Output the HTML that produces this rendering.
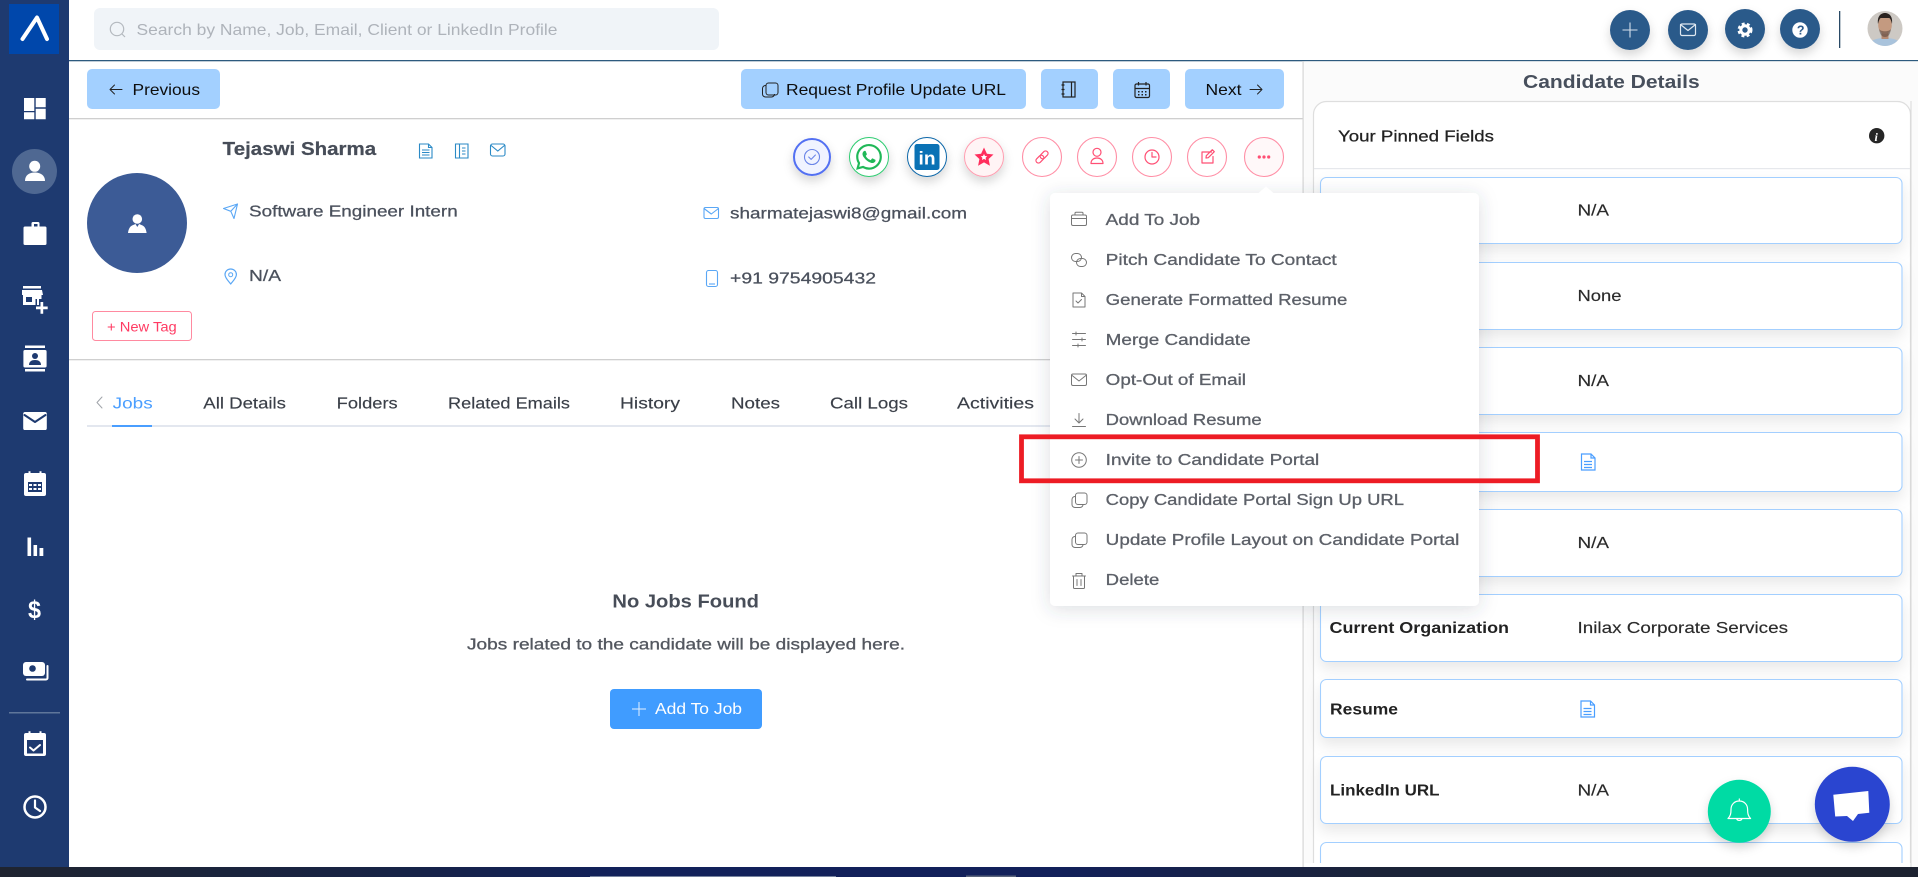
<!DOCTYPE html>
<html lang="en">
<head>
<meta charset="utf-8">
<title>Candidate Profile</title>
<style>
html,body{margin:0;padding:0;width:1918px;height:877px;overflow:hidden;background:#fff}
svg{display:block;position:absolute;left:0;top:0}
text{font-family:"Liberation Sans",sans-serif;font-size:16px}
.b{font-weight:700}
.s{fill:none;stroke-linecap:round;stroke-linejoin:round}
</style>
</head>
<body>
<svg width="1918" height="877" viewBox="0 0 1918 877" xmlns="http://www.w3.org/2000/svg">
<defs>
<filter id="sh1" x="-30%" y="-30%" width="160%" height="180%"><feDropShadow dx="0" dy="5" stdDeviation="5" flood-color="#000" flood-opacity=".16"/></filter>
<filter id="shc" x="-5%" y="-20%" width="110%" height="150%"><feDropShadow dx="0" dy="7" stdDeviation="7" flood-color="#000" flood-opacity=".09"/></filter>
<filter id="shm" x="-10%" y="-10%" width="120%" height="120%"><feDropShadow dx="0" dy="3" stdDeviation="9" flood-color="#3a4660" flood-opacity=".18"/></filter>
<linearGradient id="tb" x1="0" x2="1" y1="0" y2="0"><stop offset="0" stop-color="#1f2430"/><stop offset=".2" stop-color="#172345"/><stop offset=".32" stop-color="#12215a"/><stop offset=".55" stop-color="#12205a"/><stop offset=".72" stop-color="#1b2338"/><stop offset="1" stop-color="#1c2230"/></linearGradient>
<clipPath id="av"><circle cx="1885" cy="28.5" r="17.5"/></clipPath>
<clipPath id="pc"><rect x="1304" y="61" width="614" height="802"/></clipPath>
</defs>

<!-- sidebar -->
<rect x="0" y="0" width="69" height="867" fill="#1e3a70"/>
<rect x="9" y="4" width="50" height="50" fill="#0047ab"/>
<path class="s" d="M22.500 39 37 17.500 47 39" stroke="#fff" stroke-width="4"/>
<g fill="#fff">
<path d="M24 98h10.300v13H24zM35.700 98h10v9.300h-10zM35.700 108.700h10v10.600h-10zM24 112.300h10.300v7H24z"/>
<circle cx="34.500" cy="171.500" r="22.500" fill="#4f6892"/>
<circle cx="34.700" cy="166.300" r="5.500"/><path d="M25 181c0-6 4.500-8.500 9.700-8.500s10.300 2.500 10.300 8.500z"/>
<path d="M24.500 226.500h7v-3a1.500 1.500 0 0 1 1.500-1.500h5a1.500 1.500 0 0 1 1.500 1.500v3h5.500a1.500 1.500 0 0 1 1.500 1.500v15.500a1.500 1.500 0 0 1-1.500 1.500h-20a1.500 1.500 0 0 1-1.500-1.500V228a1.500 1.500 0 0 1 1.500-1.500zm9.500-2.500v2.500h3.500V224z" fill-rule="evenodd"/>
<path d="M23 286h18v2.500H23zM22 290h20l1 5h-1.500v4H39v6h-2v-6h-1.500v6H23v-10h-1zM26 297v5h6v-5z" fill-rule="evenodd"/>
<path d="M40.500 302h2.700v4.500h4.500v2.700h-4.500v4.600h-2.700v-4.600H36v-2.700h4.500z"/>
<path d="M25 345.500h20v2.500H25zM25 369h20v2.500H25zM25 350h20a1.600 1.600 0 0 1 1.600 1.600v14.300a1.600 1.600 0 0 1-1.600 1.600H25a1.600 1.600 0 0 1-1.600-1.600v-14.300A1.600 1.600 0 0 1 25 350z"/>
<path d="M25 412h20a1.800 1.800 0 0 1 1.800 1.800v14.400A1.800 1.800 0 0 1 45 430H25a1.800 1.800 0 0 1-1.800-1.800v-14.400A1.800 1.800 0 0 1 25 412z"/>
<path d="M26 473h2.500v-1.800h2V473h9v-1.800h2V473H44a2 2 0 0 1 2 2v19a2 2 0 0 1-2 2H26a2 2 0 0 1-2-2v-19a2 2 0 0 1 2-2z"/>
<rect x="27.500" y="537.500" width="3.600" height="18.500"/><rect x="33.500" y="545" width="3.600" height="11"/><rect x="39.500" y="548" width="3.800" height="8"/>
<path d="M26 662h16a3 3 0 0 1 3 3v8a3 3 0 0 1-3 3H26a3 3 0 0 1-3-3v-8a3 3 0 0 1 3-3z"/>
<path d="M26 733h2.500v-1.800h2V733h9v-1.800h2V733H44a2 2 0 0 1 2 2v19a2 2 0 0 1-2 2H26a2 2 0 0 1-2-2v-19a2 2 0 0 1 2-2z"/>
</g>
<g fill="#1e3a70">
<circle cx="35" cy="356" r="3"/><path d="M29 365c0-3.500 2.500-5 6-5s6 1.500 6 5z"/>
<rect x="28" y="482" width="14" height="10"/>
<circle cx="32.500" cy="668.500" r="3.300"/>
<rect x="27" y="740" width="16" height="13.500"/>
</g>
<path class="s" d="M24.500 415 35 422l10.500-7" stroke="#1e3a70" stroke-width="2"/>
<g fill="#fff"><rect x="29" y="484" width="3" height="2"/><rect x="33.500" y="484" width="3" height="2"/><rect x="38" y="484" width="3" height="2"/><rect x="29" y="488" width="3" height="2"/><rect x="33.500" y="488" width="3" height="2"/><rect x="38" y="488" width="3" height="2"/></g>
<path class="s" d="M30 747.500l3.500 3 6.500-5.500" stroke="#fff" stroke-width="2"/>
<path class="s" d="M47.500 666v12a1.500 1.500 0 0 1-1.500 1.500H27" stroke="#fff" stroke-width="2"/>
<text x="28" y="618" class="b" style="font-size:25px" fill="#fff" textLength="13" lengthAdjust="spacingAndGlyphs">$</text>
<rect x="9" y="712" width="51" height="1.500" fill="#5f769a"/>
<circle cx="35" cy="807" r="10.500" fill="none" stroke="#fff" stroke-width="2.500"/>
<path class="s" d="M35 800.500v7l5 3.500" stroke="#fff" stroke-width="2.200"/>

<!-- top bar -->
<rect x="69" y="60" width="1849" height="1.300" fill="#2d5a7e"/>
<rect x="94" y="8" width="625" height="42" rx="6" fill="#f0f4f8"/>
<circle cx="117" cy="29" r="6.700" fill="none" stroke="#b4b9bf" stroke-width="1.200"/><path d="M122 34l3 3" stroke="#b4b9bf" stroke-width="1.200"/>
<text x="136.500" y="34.800" fill="#aeb3ba" textLength="421" lengthAdjust="spacingAndGlyphs">Search by Name, Job, Email, Client or LinkedIn Profile</text>

<g fill="#2c5a8a">
<circle cx="1630" cy="30" r="20" filter="url(#sh1)"/>
<circle cx="1688" cy="30" r="20" filter="url(#sh1)"/>
<circle cx="1745" cy="29" r="20" filter="url(#sh1)"/>
<circle cx="1800" cy="29" r="20" filter="url(#sh1)"/>
</g>
<path d="M1630 22.500v15M1622.500 30h15" stroke="#d5e0ec" stroke-width="1.100"/>
<rect x="1680.500" y="24" width="15" height="11.500" rx="1.500" fill="none" stroke="#dfe8f1" stroke-width="1.200"/>
<path class="s" d="M1680.500 24.500l7.500 6 7.500-6" stroke="#dfe8f1" stroke-width="1.200"/>
<circle cx="1745" cy="30" r="4.200" fill="none" stroke="#fff" stroke-width="3"/>
<circle cx="1745" cy="30" r="6.300" fill="none" stroke="#fff" stroke-width="2.400" stroke-dasharray="2.900 2.350"/>
<circle cx="1800" cy="30" r="7.700" fill="#fff"/>
<text x="1796.900" y="34.500" class="b" style="font-size:12.500px" fill="#2c5a8a">?</text>
<rect x="1839" y="11" width="1.300" height="37" fill="#2a4a66"/>
<g clip-path="url(#av)">
<rect x="1865" y="10" width="40" height="40" fill="#cdc9c4"/>
<path d="M1868 47c1-7 9-9 17-9s16 2 17 9z" fill="#a9c3dc"/>
<rect x="1881.500" y="31" width="7" height="8" fill="#b58a72"/>
<ellipse cx="1885" cy="25" rx="6.800" ry="9" fill="#c49a80"/>
<path d="M1878 24c-1-8 3-11 7-11s8 3 7 11c-1-4-2-6-3-6h-8c-1 0-2 2-3 6z" fill="#2a2320"/>
<path d="M1879 29c1 6 3 8 6 8s5-2 6-8c-2 3-10 3-12 0z" fill="#4b3a33" opacity=".5"/>
</g>

<!-- left pane -->
<rect x="87" y="69" width="133" height="40" rx="5" fill="#a3d0ff"/>
<rect x="741" y="69" width="285" height="40" rx="5" fill="#a3d0ff"/>
<rect x="1041" y="69" width="57" height="40" rx="5" fill="#a3d0ff"/>
<rect x="1113" y="69" width="57" height="40" rx="5" fill="#a3d0ff"/>
<rect x="1185" y="69" width="99" height="40" rx="5" fill="#a3d0ff"/>
<path class="s" d="M122 89.500h-12M114.500 85l-4.500 4.500 4.500 4.500" stroke="#222" stroke-width="1"/>
<text x="132.500" y="95" fill="#0d0d0d" textLength="67.500" lengthAdjust="spacingAndGlyphs">Previous</text>
<g fill="none" stroke="#222" stroke-width="1">
<rect x="766" y="83" width="12" height="12" rx="2.500"/>
<path d="M766 85.500h-.5a3 3 0 0 0-3 3v5.500a3 3 0 0 0 3 3h6a3 3 0 0 0 3-3v-.000"/>
</g>
<text x="786" y="95" fill="#0d0d0d" textLength="220" lengthAdjust="spacingAndGlyphs">Request Profile Update URL</text>
<g fill="none" stroke="#222" stroke-width="1.200">
<rect x="1063" y="82" width="12" height="15"/><path d="M1071.500 82v15M1061.500 85h3M1061.500 89.500h3M1061.500 94h3"/>
<rect x="1135" y="84" width="14.500" height="13.500" rx="1.500"/><path d="M1135 88.500h14.500M1138.500 82v3.500M1146 82v3.500"/>
</g>
<g fill="#222"><rect x="1138" y="91" width="1.500" height="1.500"/><rect x="1141.500" y="91" width="1.500" height="1.500"/><rect x="1145" y="91" width="1.500" height="1.500"/><rect x="1138" y="94" width="1.500" height="1.500"/><rect x="1141.500" y="94" width="1.500" height="1.500"/><rect x="1145" y="94" width="1.500" height="1.500"/></g>
<text x="1205.500" y="95" fill="#0d0d0d" textLength="36" lengthAdjust="spacingAndGlyphs">Next</text>
<path class="s" d="M1250 89.500h12M1257.500 85l4.500 4.500-4.500 4.500" stroke="#222" stroke-width="1"/>
<rect x="69" y="118" width="1234" height="1.300" fill="#cfcfcf"/>
<rect x="1302.500" y="61" width="1.200" height="806" fill="#d5d5d5"/>

<circle cx="137" cy="223" r="50" fill="#3c5b96"/>
<circle cx="137.300" cy="219" r="4.800" fill="#fff"/>
<path d="M128 233c.5-4 2-6.500 4-7.500l3.500-1.500 1.800 3 1.800-3 3.500 1.500c2 1 3.500 3.500 4 7.500z" fill="#fff"/>

<g fill="#474d58" stroke="#474d58" stroke-width=".2">
<text x="222.700" y="155.200" class="b" style="font-size:18px" textLength="153.500" lengthAdjust="spacingAndGlyphs">Tejaswi Sharma</text>
</g>
<g fill="none" stroke="#2b8ac6" stroke-width="1.100">
<path d="M419.500 144h9l3.500 3.500v10.500h-12.500zM428.500 144v3.500h3.500M422 150h7.500M422 152.500h7.500M422 155h7.500"/>
<path d="M455.500 144h12.500v14h-12.500zM459.500 144v14M462 148h3.500M462 151h3.500M462 154h3.500"/>
<rect x="490.500" y="144" width="14.500" height="12" rx="2"/><path d="M490.500 145l7.300 6 7.200-6"/>
</g>

<path class="s" d="M223.500 208.500l14-4.500-3.500 14.500-3.200-7.200zM230.800 211.300l6.700-7.300" stroke="#5aa7f5" stroke-width="1.100"/>
<path class="s" d="M230.700 269c-3.300 0-5.700 2.500-5.700 5.500 0 3.500 3.500 6.500 5.700 9.500 2.200-3 5.700-6 5.700-9.500 0-3-2.400-5.500-5.700-5.500z" stroke="#5aa7f5" stroke-width="1.200"/>
<circle cx="230.700" cy="274.700" r="2" fill="none" stroke="#5aa7f5" stroke-width="1"/>
<rect x="704" y="207.500" width="14.500" height="11" rx="1.500" fill="none" stroke="#5aa7f5" stroke-width="1.100"/>
<path class="s" d="M704 208.500l7.300 5.500 7.200-5.500" stroke="#5aa7f5" stroke-width="1.100"/>
<rect x="706.500" y="270.500" width="11" height="16" rx="2" fill="none" stroke="#5aa7f5" stroke-width="1.100"/>
<path d="M709 284h6" stroke="#5aa7f5" stroke-width="1.100"/>

<g fill="#4a505c" stroke="#4a505c" stroke-width=".25">
<text x="249" y="216.500" textLength="208.700" lengthAdjust="spacingAndGlyphs">Software Engineer Intern</text>
<text x="249" y="281" textLength="32" lengthAdjust="spacingAndGlyphs">N/A</text>
<text x="730" y="218.500" textLength="237" lengthAdjust="spacingAndGlyphs">sharmatejaswi8@gmail.com</text>
<text x="730" y="283.500" textLength="146" lengthAdjust="spacingAndGlyphs">+91 9754905432</text>
</g>

<rect x="92.500" y="311.500" width="99" height="29" rx="3" fill="#fff" stroke="#ff8aa0" stroke-width="1"/>
<text x="107" y="331.500" style="font-size:14px" fill="#ff3b63" textLength="69.700" lengthAdjust="spacingAndGlyphs">+ New Tag</text>

<!-- action circles -->
<circle cx="812" cy="157" r="18" fill="#f0f3ff" stroke="#5270f2" stroke-width="2" filter="url(#sh1)"/>
<circle cx="812" cy="157" r="7.500" fill="none" stroke="#6a85e8" stroke-width="1.100"/>
<path class="s" d="M808.700 157l2.400 2.400 4.300-4.400" stroke="#6a85e8" stroke-width="1.100"/>
<circle cx="869" cy="157" r="19.500" fill="#fff" stroke="#2ecc71" stroke-width="1" filter="url(#sh1)"/>
<path transform="translate(856 144) scale(1.080)" fill="#20b858" d="M17.472 14.382c-.297-.149-1.758-.867-2.03-.967-.273-.099-.471-.148-.67.15-.197.297-.767.966-.94 1.164-.173.199-.347.223-.644.075-.297-.15-1.255-.463-2.39-1.475-.883-.788-1.48-1.761-1.653-2.059-.173-.297-.018-.458.13-.606.134-.133.298-.347.446-.52.149-.174.198-.298.298-.497.099-.198.05-.371-.025-.52-.075-.149-.669-1.612-.916-2.207-.242-.579-.487-.5-.669-.51-.173-.008-.371-.01-.57-.01-.198 0-.52.074-.792.372-.272.297-1.04 1.016-1.04 2.479 0 1.462 1.065 2.875 1.213 3.074.149.198 2.096 3.2 5.077 4.487.709.306 1.262.489 1.694.625.712.227 1.36.195 1.871.118.571-.085 1.758-.719 2.006-1.413.248-.694.248-1.289.173-1.413-.074-.124-.272-.198-.57-.347m-5.421 7.403h-.004a9.87 9.87 0 01-5.031-1.378l-.361-.214-3.741.982.998-3.648-.235-.374a9.86 9.86 0 01-1.51-5.26c.001-5.45 4.436-9.884 9.888-9.884 2.64 0 5.122 1.03 6.988 2.898a9.825 9.825 0 012.893 6.994c-.003 5.45-4.437 9.884-9.885 9.884m8.413-18.297A11.815 11.815 0 0012.05 0C5.495 0 .16 5.335.157 11.892c0 2.096.547 4.142 1.588 5.945L.057 24l6.305-1.654a11.882 11.882 0 005.683 1.448h.005c6.554 0 11.89-5.335 11.893-11.893a11.821 11.821 0 00-3.48-8.413z"/>
<circle cx="927" cy="157" r="19.500" fill="#fff" stroke="#0a66a8" stroke-width="1" filter="url(#sh1)"/>
<rect x="914.500" y="144" width="25" height="26" rx="2.500" fill="#0a72b5"/>
<text x="918.500" y="164.500" class="b" style="font-size:18px" fill="#fff" textLength="17" lengthAdjust="spacingAndGlyphs">in</text>
<circle cx="984" cy="157" r="19.500" fill="#fff4f5" stroke="#ff9db0" stroke-width="1" filter="url(#sh1)"/>
<path d="M984 147.500l2.900 6.200 6.600.8-4.900 4.500 1.300 6.700-5.900-3.300-5.900 3.300 1.300-6.700-4.900-4.500 6.600-.8z" fill="#ff2e5d"/>
<path d="M984 154l1 2 2.200.3-1.600 1.500.4 2.200-2-1.100-2 1.100.4-2.200-1.600-1.500 2.200-.3z" fill="#fff"/>
<g fill="#fff" stroke="#ff8fa6" stroke-width="1.100">
<circle cx="1042" cy="157" r="19.500"/><circle cx="1097" cy="157" r="19.500"/><circle cx="1152" cy="157" r="19.500"/><circle cx="1207" cy="157" r="19.500"/><circle cx="1264" cy="157" r="19.500" fill="#fff8f9"/>
</g>
<g fill="none" stroke="#ff4f74" stroke-width="1.200" stroke-linecap="round" stroke-linejoin="round">
<g transform="rotate(-45 1042 157)"><rect x="1034.500" y="154.500" width="9" height="5" rx="2.500"/><rect x="1040.500" y="154.500" width="9" height="5" rx="2.500"/></g>
<circle cx="1097" cy="152.300" r="4"/><path d="M1091 163.500c0-3.500 2.500-5.500 6-5.500s6 2 6 5.500z"/>
<circle cx="1152" cy="157" r="7"/><path d="M1152 152.500v4.500h4"/>
<path d="M1211.500 152h-9.500v11h11v-6.500M1206 158l.3-2.300 6-6 2 2-6 6z"/>
</g>
<g fill="#ff4f74"><circle cx="1259.300" cy="157" r="1.600"/><circle cx="1264" cy="157" r="1.600"/><circle cx="1268.700" cy="157" r="1.600"/></g>

<rect x="69" y="359" width="1234" height="1.300" fill="#cfcfcf"/>

<!-- tabs -->
<path class="s" d="M102 397l-5 5.500 5 5.500" stroke="#a0a4aa" stroke-width="1"/>
<text x="112.700" y="408.500" fill="#4a9eff" textLength="40" lengthAdjust="spacingAndGlyphs">Jobs</text>
<g fill="#3a3f48" stroke="#3a3f48" stroke-width=".15">
<text x="203.300" y="408.500" textLength="82.700" lengthAdjust="spacingAndGlyphs">All Details</text>
<text x="336.700" y="408.500" textLength="61" lengthAdjust="spacingAndGlyphs">Folders</text>
<text x="448" y="408.500" textLength="122" lengthAdjust="spacingAndGlyphs">Related Emails</text>
<text x="620" y="408.500" textLength="60" lengthAdjust="spacingAndGlyphs">History</text>
<text x="731" y="408.500" textLength="49" lengthAdjust="spacingAndGlyphs">Notes</text>
<text x="830" y="408.500" textLength="78" lengthAdjust="spacingAndGlyphs">Call Logs</text>
<text x="957" y="408.500" textLength="77" lengthAdjust="spacingAndGlyphs">Activities</text>
</g>
<rect x="87" y="425" width="1198" height="2" fill="#e3e7ef"/>
<rect x="112" y="425" width="40" height="2" fill="#4a9eff"/>

<!-- empty state -->
<text x="612.400" y="607.500" class="b" style="font-size:18px" fill="#474d58" textLength="146.600" lengthAdjust="spacingAndGlyphs">No Jobs Found</text>
<g fill="#53575f" stroke="#53575f" stroke-width=".3">
<text x="467" y="649.500" textLength="438" lengthAdjust="spacingAndGlyphs">Jobs related to the candidate will be displayed here.</text>
</g>
<rect x="610" y="689" width="152" height="40" rx="4" fill="#409cff"/>
<path d="M639 702v14M632 709h14" stroke="#e3f0ff" stroke-width="1"/>
<text x="655" y="714" fill="#fff" textLength="87" lengthAdjust="spacingAndGlyphs">Add To Job</text>

<!-- right panel -->
<rect x="1304.200" y="61.300" width="614" height="806" fill="#fbfbfb"/>
<text x="1523" y="88" class="b" style="font-size:18px" fill="#474f5c" textLength="176.700" lengthAdjust="spacingAndGlyphs">Candidate Details</text>
<g clip-path="url(#pc)">
<rect x="1313.500" y="101.500" width="597" height="800" rx="13" fill="#fff" stroke="#dedede" stroke-width="1.200"/>
<rect x="1314" y="168" width="596" height="1.200" fill="#e6e8ec"/>
<g fill="#fff" stroke="#a3cfff" stroke-width="1.100">
<rect x="1320.500" y="177.500" width="581.500" height="66" rx="6" filter="url(#shc)"/>
<rect x="1320.500" y="262.500" width="581.500" height="67" rx="6" filter="url(#shc)"/>
<rect x="1320.500" y="347.500" width="581.500" height="67" rx="6" filter="url(#shc)"/>
<rect x="1320.500" y="432.500" width="581.500" height="59" rx="6" filter="url(#shc)"/>
<rect x="1320.500" y="509.500" width="581.500" height="67" rx="6" filter="url(#shc)"/>
<rect x="1320.500" y="594.500" width="581.500" height="67" rx="6" filter="url(#shc)"/>
<rect x="1320.500" y="679.500" width="581.500" height="58" rx="6" filter="url(#shc)"/>
<rect x="1320.500" y="756.500" width="581.500" height="67" rx="6" filter="url(#shc)"/>
<rect x="1320.500" y="842.500" width="581.500" height="60" rx="6"/>
</g>
</g>
<rect x="1910.500" y="101" width="1" height="766" fill="#d8d8d8"/>
<rect x="1304.200" y="863" width="606" height="4" fill="#fff"/>
<g fill="#222" stroke="#222" stroke-width=".25">
<text x="1338" y="141.500" textLength="156" lengthAdjust="spacingAndGlyphs">Your Pinned Fields</text>
</g>
<circle cx="1876.700" cy="135.700" r="7.700" fill="#262626"/>
<text x="1874.500" y="141" class="b" style="font-size:12px;font-style:italic;font-family:'Liberation Serif',serif" fill="#fff">i</text>
<g fill="#2a2a2a" stroke="#2a2a2a" stroke-width=".15">
<text x="1577.500" y="215.500" textLength="31.500" lengthAdjust="spacingAndGlyphs">N/A</text>
<text x="1577.500" y="300.800" textLength="44" lengthAdjust="spacingAndGlyphs">None</text>
<text x="1577.500" y="385.800" textLength="31.500" lengthAdjust="spacingAndGlyphs">N/A</text>
<text x="1577.500" y="548" textLength="31.500" lengthAdjust="spacingAndGlyphs">N/A</text>
<text x="1577.500" y="633" textLength="210.500" lengthAdjust="spacingAndGlyphs">Inilax Corporate Services</text>
<text x="1577.500" y="795.300" textLength="31.500" lengthAdjust="spacingAndGlyphs">N/A</text>
</g>
<g fill="#222">
<text x="1329.500" y="633" class="b" textLength="179.500" lengthAdjust="spacingAndGlyphs">Current Organization</text>
<text x="1330" y="714.500" class="b" textLength="68" lengthAdjust="spacingAndGlyphs">Resume</text>
<text x="1330" y="795.300" class="b" textLength="109.500" lengthAdjust="spacingAndGlyphs">LinkedIn URL</text>
</g>
<g fill="none" stroke="#4a9eff" stroke-width="1.200">
<path d="M1581.500 454h9.500l4 4v12h-13.500zM1591 454v4h4M1584 461.500h8M1584 464.500h8M1584 467.500h8"/>
<path d="M1581 701h9.500l4 4v12H1581zM1590.500 701v4h4M1583.500 708.500h8M1583.500 711.500h8M1583.500 714.500h8"/>
</g>

<!-- context menu -->
<rect x="1050" y="193" width="429" height="413" rx="5" fill="#fff" filter="url(#shm)"/>
<path d="M1258 193.500l8-7 8 7z" fill="#fff"/>
<g fill="#5c6068" stroke="#5c6068" stroke-width=".3">
<text x="1105.700" y="225" textLength="94.300" lengthAdjust="spacingAndGlyphs">Add To Job</text>
<text x="1105.700" y="265.200" textLength="231" lengthAdjust="spacingAndGlyphs">Pitch Candidate To Contact</text>
<text x="1105.700" y="305.200" textLength="241.600" lengthAdjust="spacingAndGlyphs">Generate Formatted Resume</text>
<text x="1105.700" y="345.200" textLength="145" lengthAdjust="spacingAndGlyphs">Merge Candidate</text>
<text x="1105.700" y="385.200" textLength="140.300" lengthAdjust="spacingAndGlyphs">Opt-Out of Email</text>
<text x="1105.700" y="425" textLength="156" lengthAdjust="spacingAndGlyphs">Download Resume</text>
<text x="1105.700" y="465" textLength="213.600" lengthAdjust="spacingAndGlyphs">Invite to Candidate Portal</text>
<text x="1105.700" y="505.200" textLength="298.300" lengthAdjust="spacingAndGlyphs">Copy Candidate Portal Sign Up URL</text>
<text x="1105.700" y="545.200" textLength="353.600" lengthAdjust="spacingAndGlyphs">Update Profile Layout on Candidate Portal</text>
<text x="1105.700" y="585.200" textLength="53.600" lengthAdjust="spacingAndGlyphs">Delete</text>
</g>
<g fill="none" stroke="#777" stroke-width="1" stroke-linecap="round" stroke-linejoin="round">
<rect x="1071.500" y="215" width="15" height="10.500" rx="1.500"/><path d="M1071.500 218.500h15M1075 215v-1.800a1 1 0 0 1 1-1h6a1 1 0 0 1 1 1v1.800"/>
<rect x="1071.500" y="253.500" width="10" height="8" rx="4"/><rect x="1076.500" y="258.500" width="10" height="8" rx="4"/>
<path d="M1073 293h8.500l3.500 3.500V307h-12zM1081.500 293v3.500h3.500M1076 301l2 2 3.500-3.500"/>
<path d="M1072.500 333.500h13M1072.500 339.500h13M1072.500 345.500h13M1076 332v3M1082 338v3M1078 344v3"/>
<rect x="1071.500" y="374" width="15" height="11.500" rx="1.500"/><path d="M1071.500 375l7.500 6 7.500-6"/>
<path d="M1079 413.500v9M1075 419l4 4 4-4M1072.500 426.500h13"/>
<circle cx="1079" cy="460" r="7.300"/><path d="M1079 456.500v7M1075.500 460h7"/>
<rect x="1075.500" y="493" width="11.500" height="11.500" rx="2.500"/><path d="M1075.500 496.500h-.5a3 3 0 0 0-3 3v5a3 3 0 0 0 3 3h5a3 3 0 0 0 3-3"/>
<rect x="1075.500" y="533" width="11.500" height="11.500" rx="2.500"/><path d="M1075.500 536.500h-.5a3 3 0 0 0-3 3v5a3 3 0 0 0 3 3h5a3 3 0 0 0 3-3"/>
<path d="M1072.500 576h13M1076 576v-2.500h6v2.500M1073.500 576v11.500a1 1 0 0 0 1 1h9a1 1 0 0 0 1-1V576M1077 579.500v6M1081 579.500v6"/>
</g>

<!-- annotation -->
<rect x="1021.500" y="436.800" width="516" height="44" fill="none" stroke="#ed1c24" stroke-width="4.800"/>

<!-- floating buttons -->
<circle cx="1739.300" cy="811.300" r="31.500" fill="#03dba4" filter="url(#sh1)"/>
<path class="s" d="M1728 818.500c2.500-2.500 3-5 3-9 0-5 3.500-8.500 8.300-8.500s8.300 3.500 8.300 8.500c0 4 .5 6.500 3 9zM1736.500 818.500a3 3 0 0 0 5.600 0M1739.300 799v2" stroke="#fff" stroke-width="1.200"/>
<circle cx="1852.300" cy="804.300" r="37.500" fill="#2b45d0" filter="url(#sh1)"/>
<path d="M1833.300 794.700l35-3.700 1 21.700-11.300 1.300-5 7-6-5-11.800.5z" fill="#fff"/>

<!-- taskbar -->
<rect x="0" y="867" width="1918" height="10" fill="url(#tb)"/>
<rect x="590" y="876" width="246" height="1" fill="#76839f"/>
<rect x="966" y="875.500" width="50" height="1.500" fill="#5a647c"/>
</svg>
</body>
</html>
